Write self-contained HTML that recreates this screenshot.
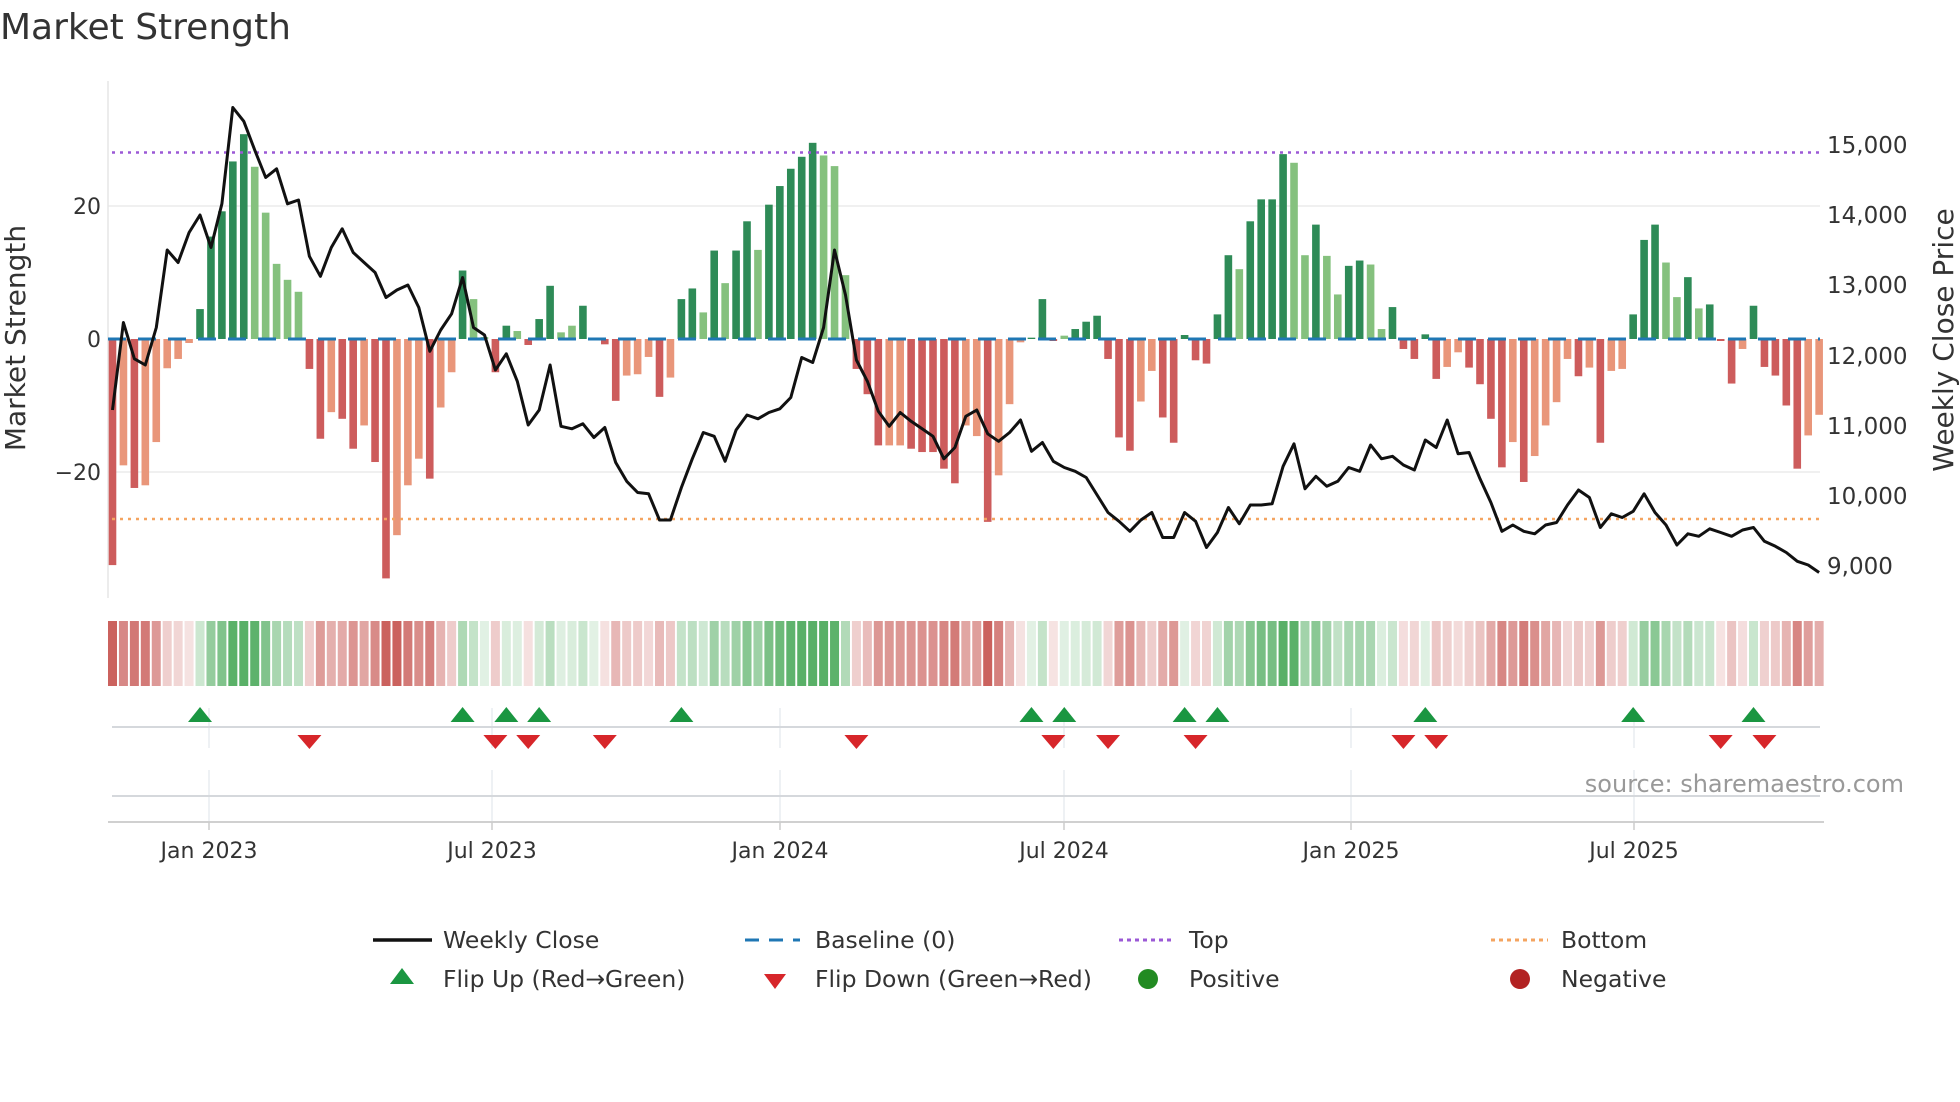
<!DOCTYPE html>
<html><head><meta charset="utf-8">
<style>
html,body{margin:0;padding:0;background:#fff;width:1960px;height:1102px;overflow:hidden}
svg{display:block;font-family:"DejaVu Sans","Liberation Sans",sans-serif}
</style></head>
<body>
<svg id="s" width="1960" height="1102" viewBox="0 0 1960 1102" xmlns="http://www.w3.org/2000/svg">
<text x="0" y="39" font-size="36" fill="#333">Market Strength</text>
<line x1="108" y1="206" x2="1820" y2="206" stroke="#ececec" stroke-width="1.5"/>
<line x1="108" y1="472" x2="1820" y2="472" stroke="#ececec" stroke-width="1.5"/>
<line x1="108" y1="81" x2="108" y2="598" stroke="#e6e6e6" stroke-width="1.5"/>
<g id="bars"></g>
<line x1="108" y1="339" x2="1820" y2="339" stroke="#1f77b4" stroke-width="3" stroke-dasharray="18,12"/>
<line x1="112" y1="152.5" x2="1820" y2="152.5" stroke="#9b59d6" stroke-width="2.5" stroke-dasharray="3,5"/>
<line x1="112" y1="519" x2="1820" y2="519" stroke="#f4a460" stroke-width="2.5" stroke-dasharray="3,5"/>
<polyline id="price" fill="none" stroke="#111" stroke-width="3" stroke-linejoin="round"/>
<g font-size="22" fill="#333" text-anchor="end">
<text x="101" y="214">20</text>
<text x="101" y="347">0</text>
<text x="101" y="480">−20</text>
</g>
<g font-size="23" fill="#333">
<text x="1827" y="153">15,000</text>
<text x="1827" y="223">14,000</text>
<text x="1827" y="293">13,000</text>
<text x="1827" y="364">12,000</text>
<text x="1827" y="434">11,000</text>
<text x="1827" y="504">10,000</text>
<text x="1827" y="574">9,000</text>
</g>
<text transform="translate(25,338) rotate(-90)" font-size="28" fill="#333" text-anchor="middle">Market Strength</text>
<text transform="translate(1953,340) rotate(-90)" font-size="28" fill="#333" text-anchor="middle">Weekly Close Price</text>
<g id="strip"></g>
<g stroke="#e8ecf0" stroke-width="1.5">
<line x1="209" y1="708" x2="209" y2="748"/><line x1="492" y1="708" x2="492" y2="748"/><line x1="780" y1="708" x2="780" y2="748"/><line x1="1064" y1="708" x2="1064" y2="748"/><line x1="1351" y1="708" x2="1351" y2="748"/><line x1="1634" y1="708" x2="1634" y2="748"/>
<line x1="209" y1="770" x2="209" y2="822"/><line x1="492" y1="770" x2="492" y2="822"/><line x1="780" y1="770" x2="780" y2="822"/><line x1="1064" y1="770" x2="1064" y2="822"/><line x1="1351" y1="770" x2="1351" y2="822"/><line x1="1634" y1="770" x2="1634" y2="822"/>
</g>
<line x1="112" y1="727" x2="1820" y2="727" stroke="#d5d8dc" stroke-width="2"/>
<line x1="112" y1="796" x2="1820" y2="796" stroke="#d5d8dc" stroke-width="2"/>
<line x1="108" y1="822" x2="1824" y2="822" stroke="#d0d0d0" stroke-width="2"/>
<g stroke="#ccc" stroke-width="1.5">
<line x1="209" y1="822" x2="209" y2="830"/><line x1="492" y1="822" x2="492" y2="830"/><line x1="780" y1="822" x2="780" y2="830"/><line x1="1064" y1="822" x2="1064" y2="830"/><line x1="1351" y1="822" x2="1351" y2="830"/><line x1="1634" y1="822" x2="1634" y2="830"/>
</g>
<g id="marks"></g>
<text x="1904" y="792" font-size="24" fill="#999" text-anchor="end">source: sharemaestro.com</text>
<g font-size="22" fill="#333" text-anchor="middle">
<text x="209" y="858">Jan 2023</text><text x="492" y="858">Jul 2023</text><text x="780" y="858">Jan 2024</text><text x="1064" y="858">Jul 2024</text><text x="1351" y="858">Jan 2025</text><text x="1634" y="858">Jul 2025</text>
</g>
<g font-size="23.5" fill="#333">
<line x1="373" y1="940" x2="432" y2="940" stroke="#111" stroke-width="3.5"/>
<text x="443" y="948">Weekly Close</text>
<line x1="745" y1="940" x2="800" y2="940" stroke="#1f77b4" stroke-width="3" stroke-dasharray="14,10"/>
<text x="815" y="948">Baseline (0)</text>
<line x1="1119" y1="940" x2="1175" y2="940" stroke="#9b59d6" stroke-width="3" stroke-dasharray="4,4"/>
<text x="1189" y="948">Top</text>
<line x1="1491" y1="940" x2="1548" y2="940" stroke="#f4a460" stroke-width="3" stroke-dasharray="4,4"/>
<text x="1561" y="948">Bottom</text>
<polygon points="402,968 414,984 390,984" fill="#1a9641"/>
<text x="443" y="987">Flip Up (Red→Green)</text>
<polygon points="764,974 786,974 775,989" fill="#d7262a"/>
<text x="815" y="987">Flip Down (Green→Red)</text>
<circle cx="1148" cy="979" r="10" fill="#228b22"/>
<text x="1189" y="987">Positive</text>
<circle cx="1520" cy="979" r="10" fill="#b22222"/>
<text x="1561" y="987">Negative</text>
</g>
</svg>
<script>
var V=[[-34,1],[-19,0],[-22.4,1],[-22,0],[-15.5,0],[-4.4,0],[-3,0],[-0.6,0],[4.5,1],[15.4,1],[19.2,1],[26.7,1],[30.8,1],[25.9,0],[19,0],[11.3,0],[8.9,0],[7.1,0],
[-4.5,1],[-15,1],[-11,0],[-12,1],[-16.5,1],[-13,0],[-18.5,1],[-36,1],[-29.5,0],[-22,0],[-18,0],[-21,1],[-10.3,0],[-5,0],[10.3,1],[6,0],[0.3,0],[-5,1],[2,1],[1.2,0],[-0.9,1],[3,1],[8,1],[1,0],[2,0],[5,1],[0.2,1],[-0.8,1],
[-9.3,1],[-5.5,0],[-5.3,0],[-2.7,0],[-8.7,1],[-5.8,0],[6,1],[7.6,1],[4,0],[13.3,1],[8.4,0],[13.3,1],[17.7,1],[13.4,0],[20.2,1],[23,1],[25.6,1],[27.4,1],[29.5,1],[27.6,0],[26,0],[9.6,0],
[-4.5,1],[-8.3,1],[-16,1],[-16,0],[-16,0],[-16.5,1],[-17,1],[-17,1],[-19.5,1],[-21.7,1],[-13,0],[-14.6,0],[-27.5,1],[-20.5,0],[-9.8,0],[-0.5,0],[0.2,1],[6,1],[-0.3,1],[0.5,0],[1.5,1],[2.6,1],[3.5,1],
[-3,1],[-14.8,1],[-16.8,1],[-9.4,0],[-4.8,0],[-11.8,1],[-15.6,1],[0.6,1],[-3.2,1],[-3.7,1],[3.7,1],[12.6,1],[10.5,0],[17.7,1],[21,1],[21,1],[27.8,1],[26.5,0],[12.6,0],[17.2,1],[12.5,0],[6.7,0],[11,1],[11.8,1],[11.2,0],[1.5,0],[4.8,1],
[-1.5,1],[-3,1],[0.7,1],[-6,1],[-4.2,0],[-2,0],[-4.3,1],[-6.8,1],[-12,1],[-19.3,1],[-15.5,0],[-21.5,1],[-17.6,0],[-13,0],[-9.5,0],[-3,0],[-5.6,1],[-4.3,0],[-15.6,1],[-4.8,0],[-4.5,0],
[3.7,1],[14.9,1],[17.2,1],[11.5,0],[6.3,0],[9.3,1],[4.6,0],[5.2,1],[-0.3,1],[-6.7,1],[-1.5,0],[5,1],[-4.2,1],[-5.5,1],[-10,1],[-19.5,1],[-14.5,0],[-11.4,0]];
var P=[328,258,287,292,262,200,210,186,172,198,163,86,97,120,142,135,163,160,205,221,198,183,202,210,218,238,232,228,246,281,264,251,222,262,268,296,283,305,340,328,292,341,343,339,350,342,370,385,394,395,416,416,390,367,346,349,369,344,332,335,330,327,318,286,290,262,200,236,288,305,329,341,330,337,343,349,367,358,333,328,347,353,346,336,361,354,369,374,377,382,396,410,417,425,416,410,430,430,410,417,438,426,406,419,404,404,403,373,355,391,381,389,385,374,377,356,367,365,372,376,352,358,336,363,362,383,402,425,420,425,427,420,418,404,392,398,422,411,414,409,395,410,420,436,427,429,423,426,429,424,422,433,437,442,449,452,458];
var NS="http://www.w3.org/2000/svg";
function X(i){return 112.5+i*10.94;}
function mk(t,a,p){var e=document.createElementNS(NS,t);for(var k in a)e.setAttribute(k,a[k]);p.appendChild(e);return e;}
var bars=document.getElementById('bars'),strip=document.getElementById('strip'),marks=document.getElementById('marks');
function mix(c,t){return 'rgb('+c.map(function(v){return Math.round(255+(v-255)*t)}).join(',')+')';}
for(var i=0;i<V.length;i++){
 var v=V[i][0],d=V[i][1],x=X(i),h=Math.abs(v)*6.65;
 var col=v>=0?(d?'#2e8b57':'#85c17e'):(d?'#cd5c5c':'#e9967a');
 mk('rect',{x:x-3.8,y:v>=0?339-h:339,width:7.6,height:Math.max(h,0.5),fill:col},bars);
 var t=Math.min(0.95,0.16+Math.abs(v)/34);
 mk('rect',{x:x-4.5,y:621,width:9,height:65,fill:v>=0?mix([80,172,95],t):mix([200,90,86],t)},strip);
}
var pts=[];for(i=0;i<P.length;i++)pts.push(X(i).toFixed(1)+','+(P[i]*1.25).toFixed(1));
document.getElementById('price').setAttribute('points',pts.join(' '));
var up=[8,32,36,39,52,84,87,98,101,120,139,150],dn=[18,35,38,45,68,86,91,99,118,121,147,151];
up.forEach(function(i){var x=X(i);mk('polygon',{points:(x)+',707 '+(x+12)+',722 '+(x-12)+',722',fill:'#1a9641'},marks);});
dn.forEach(function(i){var x=X(i);mk('polygon',{points:(x-12)+',735 '+(x+12)+',735 '+x+',749',fill:'#d7262a'},marks);});
</script>
</body></html>
